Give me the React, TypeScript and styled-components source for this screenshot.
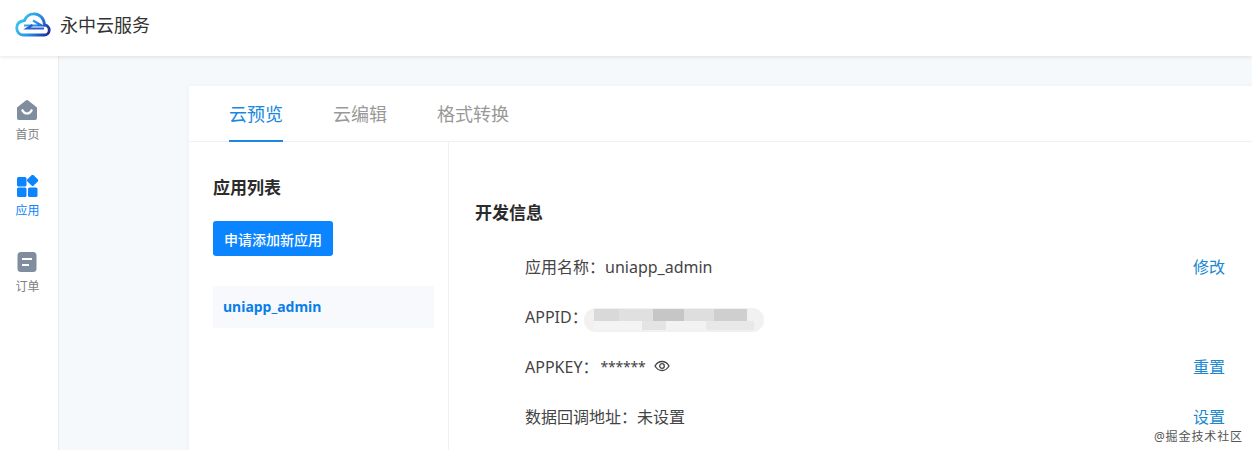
import styled, { createGlobalStyle } from 'styled-components';

const GlobalStyle = createGlobalStyle`
  html, body {
    margin: 0;
    height: 450px;
    overflow: hidden;
    background: #f6f9fc;
    font-family: "Noto Sans", "Noto Sans CJK SC", sans-serif;
  }
  * { box-sizing: border-box; }
`;

const Page = styled.div`
  width: 1252px;
  height: 450px;
  position: relative;
  overflow: hidden;
  display: flex;
  flex-direction: column;
`;

const Header = styled.header`
  height: 56px;
  flex: none;
  display: flex;
  align-items: center;
  gap: 9px;
  padding: 0 0 6px 15px;
  background: #fff;
  box-shadow: 0 1px 4px rgba(0, 0, 0, 0.1);
  position: relative;
  z-index: 2;
`;

const Brand = styled.span`
  font-size: 18px;
  color: #333;
  margin-bottom: 3px;
`;

const Body = styled.div`
  flex: 1;
  display: flex;
  min-height: 0;
`;

const Sidebar = styled.nav`
  width: 59px;
  flex: none;
  background: #fff;
  border-right: 1px solid #e8eaee;
  display: flex;
  flex-direction: column;
  align-items: center;
  padding: 43px 3px 0 0;
  gap: 18px;
`;

const NavItem = styled.div<{ $active?: boolean }>`
  display: flex;
  flex-direction: column;
  align-items: center;
  gap: 5px;
  height: 58px;
  font-size: 12px;
  line-height: 17px;
  color: ${(p) => (p.$active ? '#0a84ff' : '#808080')};
`;

const Main = styled.main`
  flex: 1;
  padding: 30px 0 0 130px;
  min-width: 0;
`;

const Card = styled.section`
  background: #fff;
  height: 400px;
  box-shadow: 0 0 6px rgba(40, 60, 90, 0.05);
`;

const Tabs = styled.div`
  height: 56px;
  display: flex;
  gap: 50px;
  padding-left: 40px;
  border-bottom: 1px solid #eef0f3;
`;

const Tab = styled.div<{ $active?: boolean }>`
  height: 56px;
  line-height: 57px;
  font-size: 18px;
  color: ${(p) => (p.$active ? '#1a87e0' : '#999')};
  border-bottom: ${(p) => (p.$active ? '2px solid #1a87e0' : 'none')};
`;

const Columns = styled.div`
  display: flex;
  height: 344px;
`;

const AppList = styled.aside`
  width: 260px;
  flex: none;
  border-right: 1px solid #eef0f3;
  padding: 33px 14px 0 24px;
`;

const ListTitle = styled.h2`
  margin: 0 0 20px;
  font-size: 17px;
  line-height: 26px;
  font-weight: 700;
  color: #2b2b2b;
`;

const AddButton = styled.button`
  display: block;
  width: 120px;
  height: 35px;
  padding: 0;
  border: 0;
  border-radius: 3px;
  background: #0a84ff;
  color: #fff;
  font: 500 14px "Noto Sans", "Noto Sans CJK SC", sans-serif;
`;

const AppRow = styled.div`
  margin-top: 30px;
  height: 42px;
  line-height: 41px;
  padding-left: 10px;
  width: 221px;
  background: #f7f9fc;
  color: #0a7fe8;
  font-size: 14px;
  font-weight: 700;
`;

const Detail = styled.div`
  flex: 1;
  padding: 58px 27px 0 26px;
  min-width: 0;
`;

const DetailTitle = styled.h2`
  margin: 0 0 15px;
  font-size: 17px;
  line-height: 26px;
  font-weight: 700;
  color: #2b2b2b;
`;

const InfoRow = styled.div`
  height: 50px;
  display: flex;
  align-items: center;
  padding-left: 50px;
  font-size: 16px;
  color: #444;
`;

const InfoText = styled.span`
  flex: none;
`;

const Masked = styled.span`
  flex: none;
  margin-left: 2px;
  font-size: 14px;
  letter-spacing: -0.2px;
`;

const ActionLink = styled.a`
  margin-left: auto;
  color: #1a87d0;
  font-size: 16px;
`;

const BlurredId = styled.div`
  width: 180px;
  height: 24px;
  margin: 8px 0 0 -4px;
  border-radius: 12px;
  background:
    linear-gradient(90deg, #d9d9d9 0 15%, #e0e0e0 15% 36%, #c6c6c6 36% 55%, #dedede 55% 73%, #cfcfcf 73% 93%, transparent 93%) 10px 1px / 164px 12px no-repeat,
    linear-gradient(90deg, #f4f4f4 0 30%, #e4e4e4 30% 45%, #f2f2f2 45% 70%, #e8e8e8 70% 100%) 10px 13px / 160px 9px no-repeat,
    #f1f1f1;
`;

const EyeIcon = styled.svg`
  margin-left: 8px;
  flex: none;
`;

const Watermark = styled.div`
  position: absolute;
  right: 9px;
  bottom: 6px;
  font-size: 12px;
  line-height: 14px;
  letter-spacing: 0.9px;
  color: #555;
  text-shadow: 0 0 2px #fff;
`;

const Logo = () => (
  <svg width="36" height="26" viewBox="0 0 36 26" fill="none">
    <defs>
      <linearGradient id="logoGrad" x1="2" y1="2" x2="34" y2="22" gradientUnits="userSpaceOnUse">
        <stop offset="0" stopColor="#3fd6ee" />
        <stop offset="0.55" stopColor="#2a90e8" />
        <stop offset="1" stopColor="#23269a" />
      </linearGradient>
    </defs>
    <path
      d="M8 23h21a5 5 0 0 0 .5-10C29 6 24.500 1.800 19 1.800 14.500 1.800 11 4.500 9.500 8.500 5 9 1.700 11.500 1.700 16c0 4 2.800 7 6.300 7Z"
      stroke="url(#logoGrad)"
      strokeWidth="2.800"
    />
    <path d="M9 13.500h17.500L18 8.500" stroke="url(#logoGrad)" strokeWidth="2.200" />
    <path d="M29 16.500H12l5.500-3.500" stroke="#2a5fd0" strokeWidth="2.200" />
  </svg>
);

const HomeIcon = () => (
  <svg width="22" height="22" viewBox="0 0 22 22">
    <path
      d="M9.800 1.500a2 2 0 0 1 2.400 0l8.800 7v10.500a2 2 0 0 1-2 2H3a2 2 0 0 1-2-2V8.500Z"
      fill="#808d9e"
    />
    <path d="M6 10.500c1.200 2.800 3 4 5 4s3.800-1.200 5-4" fill="none" stroke="#fff" strokeWidth="2.200" />
  </svg>
);

const AppsIcon = () => (
  <svg width="22" height="22" viewBox="0 0 22 22" fill="#0a84ff">
    <rect x="1" y="2" width="9.500" height="9.500" rx="1.500" />
    <rect x="12.200" y="1" width="8.800" height="8.800" rx="1.500" transform="rotate(45 16.600 5.400)" />
    <rect x="1" y="12.500" width="9.500" height="9.500" rx="1.500" />
    <rect x="12" y="12.500" width="9.500" height="9.500" rx="1.500" />
  </svg>
);

const OrderIcon = () => (
  <svg width="22" height="22" viewBox="0 0 22 22">
    <rect x="1.500" y="1" width="19" height="20" rx="3.500" fill="#808d9e" />
    <path d="M6 8h10M6 14h7" stroke="#fff" strokeWidth="2.200" />
  </svg>
);

const App = () => (
  <Page>
    <GlobalStyle />
    <Header>
      <Logo />
      <Brand>永中云服务</Brand>
    </Header>
    <Body>
      <Sidebar>
        <NavItem>
          <HomeIcon />
          首页
        </NavItem>
        <NavItem $active>
          <AppsIcon />
          应用
        </NavItem>
        <NavItem>
          <OrderIcon />
          订单
        </NavItem>
      </Sidebar>
      <Main>
        <Card>
          <Tabs>
            <Tab $active>云预览</Tab>
            <Tab>云编辑</Tab>
            <Tab>格式转换</Tab>
          </Tabs>
          <Columns>
            <AppList>
              <ListTitle>应用列表</ListTitle>
              <AddButton>申请添加新应用</AddButton>
              <AppRow>uniapp_admin</AppRow>
            </AppList>
            <Detail>
              <DetailTitle>开发信息</DetailTitle>
              <InfoRow>
                <InfoText>应用名称：uniapp_admin</InfoText>
                <ActionLink>修改</ActionLink>
              </InfoRow>
              <InfoRow>
                <InfoText>APPID：</InfoText>
                <BlurredId />
              </InfoRow>
              <InfoRow>
                <InfoText>APPKEY：</InfoText>
                <Masked>******</Masked>
                <EyeIcon width="16" height="12" viewBox="0 0 16 12" fill="none" stroke="#444" strokeWidth="1.300">
                  <path d="M1 6c1.700-3 4-4.500 7-4.500S13.300 3 15 6c-1.700 3-4 4.500-7 4.500S2.700 9 1 6Z" />
                  <circle cx="8" cy="6" r="2.300" />
                </EyeIcon>
                <ActionLink>重置</ActionLink>
              </InfoRow>
              <InfoRow>
                <InfoText>数据回调地址：未设置</InfoText>
                <ActionLink>设置</ActionLink>
              </InfoRow>
            </Detail>
          </Columns>
        </Card>
      </Main>
    </Body>
    <Watermark>@掘金技术社区</Watermark>
  </Page>
);

export default App;
